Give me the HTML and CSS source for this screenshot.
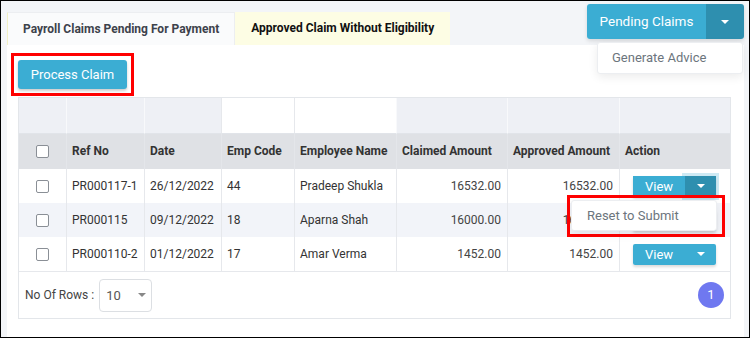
FILE: index.html
```html
<!DOCTYPE html>
<html lang="en">
<head>
  <meta charset="UTF-8">
  <title>Payroll Claims</title>
  <link rel="stylesheet" href="styles.css">
</head>
<body>
  <div class="frame">
    <div class="topbar">
      <ul class="tabs">
        <li class="tab tab-active">Payroll Claims Pending For Payment</li>
        <li class="tab tab-alt">Approved Claim Without Eligibility</li>
      </ul>
      <div class="split-wrap">
        <div class="split">
          <button class="split-main">Pending Claims</button>
          <button class="split-caret"><span class="caret"></span></button>
        </div>
        <div class="menu menu-top">Generate Advice</div>
      </div>
    </div>

    <div class="panel">
      <div class="mark">
        <button class="btn-primary">Process Claim</button>
      </div>

      <div class="grid">
        <table class="claims">
          <colgroup>
            <col style="width:47px"><col style="width:78px"><col style="width:77px"><col style="width:73px">
            <col style="width:102px"><col style="width:111px"><col style="width:112px"><col style="width:111px">
          </colgroup>
          <thead>
            <tr class="filter-row">
              <th></th><th></th><th></th><th class="blank"></th><th class="blank"></th><th></th><th></th><th></th>
            </tr>
            <tr class="head-row">
              <th class="chk"><span class="box"></span></th>
              <th>Ref No</th>
              <th>Date</th>
              <th>Emp Code</th>
              <th>Employee Name</th>
              <th>Claimed Amount</th>
              <th>Approved Amount</th>
              <th>Action</th>
            </tr>
          </thead>
          <tbody>
            <tr>
              <td class="chk"><span class="box"></span></td>
              <td>PR000117-1</td>
              <td>26/12/2022</td>
              <td>44</td>
              <td>Pradeep Shukla</td>
              <td class="num">16532.00</td>
              <td class="num">16532.00</td>
              <td class="act">
                <div class="view-split open"><span class="view-main">View</span><span class="view-caret"><span class="caret"></span></span></div>
                <div class="mark mark-menu"><div class="menu">Reset to Submit</div></div>
              </td>
            </tr>
            <tr class="alt">
              <td class="chk"><span class="box"></span></td>
              <td>PR000115</td>
              <td>09/12/2022</td>
              <td>18</td>
              <td>Aparna Shah</td>
              <td class="num">16000.00</td>
              <td class="num">16000.00</td>
              <td class="act">
                <div class="view-split"><span class="view-main">View</span><span class="view-caret"><span class="caret"></span></span></div>
              </td>
            </tr>
            <tr>
              <td class="chk"><span class="box"></span></td>
              <td>PR000110-2</td>
              <td>01/12/2022</td>
              <td>17</td>
              <td>Amar Verma</td>
              <td class="num">1452.00</td>
              <td class="num">1452.00</td>
              <td class="act">
                <div class="view-split"><span class="view-main">View</span><span class="view-caret"><span class="caret"></span></span></div>
              </td>
            </tr>
          </tbody>
        </table>
        <div class="grid-foot">
          <div class="rows">
            <span>No Of Rows :</span>
            <div class="select"><span>10</span><span class="caret caret-gray"></span></div>
          </div>
          <span class="page">1</span>
        </div>
      </div>
    </div>
  </div>
</body>
</html>
```

FILE: styles.css
```css
*, *::before, *::after { box-sizing: border-box; }
body { margin: 0; font-family: Roboto, "Liberation Sans", sans-serif; color: #333; }
button { font-family: inherit; border: none; cursor: pointer; }

.frame { width: 750px; height: 338px; border: 1px solid #000; background: #f3f5f8; overflow: hidden; }

.topbar { display: flex; justify-content: space-between; height: 44px; padding: 0 5px 0 6px; }
.tabs { display: flex; align-self: flex-end; margin: 0; padding: 0; list-style: none; }
.tab { height: 33px; line-height: 32px; font-size: 12px; font-weight: 700; white-space: nowrap; }
.tab-active { padding: 0 15px 0 15px; background: #fafbfc; color: #3d424b; border: 1px solid #eceef1; border-left-color: #f1f0c6; border-bottom: none; }
.tab-alt { padding: 0 16px 0 16px; background: #fdfde4; color: #111; }

.split-wrap { position: relative; margin-top: 3px; }
.split { display: flex; height: 35px; border-radius: 3px; overflow: hidden; box-shadow: 0 2px 4px rgba(0,0,0,0.12); }
.split-main { width: 119px; background: #3badd3; color: #fff; font-size: 13.5px; padding: 0 0 1px; }
.split-caret { width: 38px; background: #2e8faf; display: flex; align-items: center; justify-content: center; }
.caret { display: inline-block; border-left: 4px solid transparent; border-right: 4px solid transparent; border-top: 4px solid #fff; }
.caret-gray { border-top-color: #888; }

.menu { background: #fff; border: 1px solid #eceef1; border-radius: 3px; color: #6c757d; font-size: 13px; white-space: nowrap; box-shadow: 0 3px 10px rgba(0,0,0,0.08); }
.menu-top { position: absolute; top: 38px; left: 10px; width: 146px; height: 32px; line-height: 30px; padding-left: 14px; }

.panel { height: 292px; margin: 0 5px 0 6px; padding-top: 8px; background: #fff; }

.mark { display: inline-block; margin-left: 4px; padding: 4px; border: 3px solid #f00; }
.btn-primary { display: block; width: 109px; height: 29px; background: #3badd3; color: #fff; font-size: 13px; border-radius: 3px; box-shadow: 0 2px 3px rgba(0,0,0,0.2); }

.grid { width: 713px; margin: 1px 0 0 11px; border: 1px solid #e3e6ea; }
.claims { width: 711px; table-layout: fixed; border-collapse: separate; border-spacing: 0; font-size: 12px; }
.claims th, .claims td { padding: 0 5px; text-align: left; white-space: nowrap; border-left: 1px solid #e6e8ec; }
.claims th:first-child, .claims td:first-child { border-left: none; }
.filter-row th { height: 36px; background: #eef0f5; border-bottom: 1px solid #e1e4e9; border-left-color: #f8f9fb; }
.filter-row th.blank { background: #fff; border-left-color: #e6e8ec; }
.head-row th { height: 35px; background: #dfe1e5; font-weight: 700; color: #333; border-left-color: #e4e6ea; padding-bottom: 1px; }
.claims td { height: 34px; color: #333; }
.claims tr.alt td { background: #f2f4f9; }
.claims .num { text-align: right; color: #444; padding-right: 6px; }
.claims .chk { text-align: center; padding: 0; }
.box { display: inline-block; width: 13px; height: 13px; border: 1px solid #8a8f96; border-radius: 2px; background: #fff; vertical-align: middle; }
.head-row .box { margin-top: -1px; }

.act { position: relative; }
.claims td.act { padding-left: 13px; }
.view-split { display: flex; width: 83px; height: 21px; border-radius: 2px; overflow: hidden; box-shadow: 0 2px 3px rgba(0,0,0,0.15); }
.view-main { width: 52px; background: #3badd3; color: #fff; font-size: 13px; line-height: 21px; text-align: center; }
.view-caret { flex: 1; background: #3badd3; display: flex; align-items: center; justify-content: center; }
.view-split.open { overflow: visible; }
.view-split.open .view-caret { background: #2e8faf; box-shadow: 0 0 0 3px rgba(59,173,211,0.25); }

.mark-menu { position: absolute; z-index: 2; top: 26px; left: -53px; margin: 0; padding: 2px 0 0 1px; width: 158px; height: 42px; }
.mark-menu .menu { width: 146px; height: 31px; line-height: 29px; padding-left: 15px; }

.grid-foot { display: flex; justify-content: space-between; align-items: center; height: 47px; padding: 0 6px; border-top: 1px solid #e6e8ec; }
.rows { display: flex; align-items: center; gap: 5px; font-size: 12px; color: #444; }
.select { display: flex; align-items: center; justify-content: space-between; width: 53px; height: 33px; padding: 0 5px 0 6px; border: 1px solid #dcdfe3; border-radius: 4px; font-size: 13px; color: #555; }
.page { width: 26px; height: 26px; border-radius: 50%; background: #6f78f0; color: #fff; font-size: 13px; line-height: 26px; text-align: center; }
```
